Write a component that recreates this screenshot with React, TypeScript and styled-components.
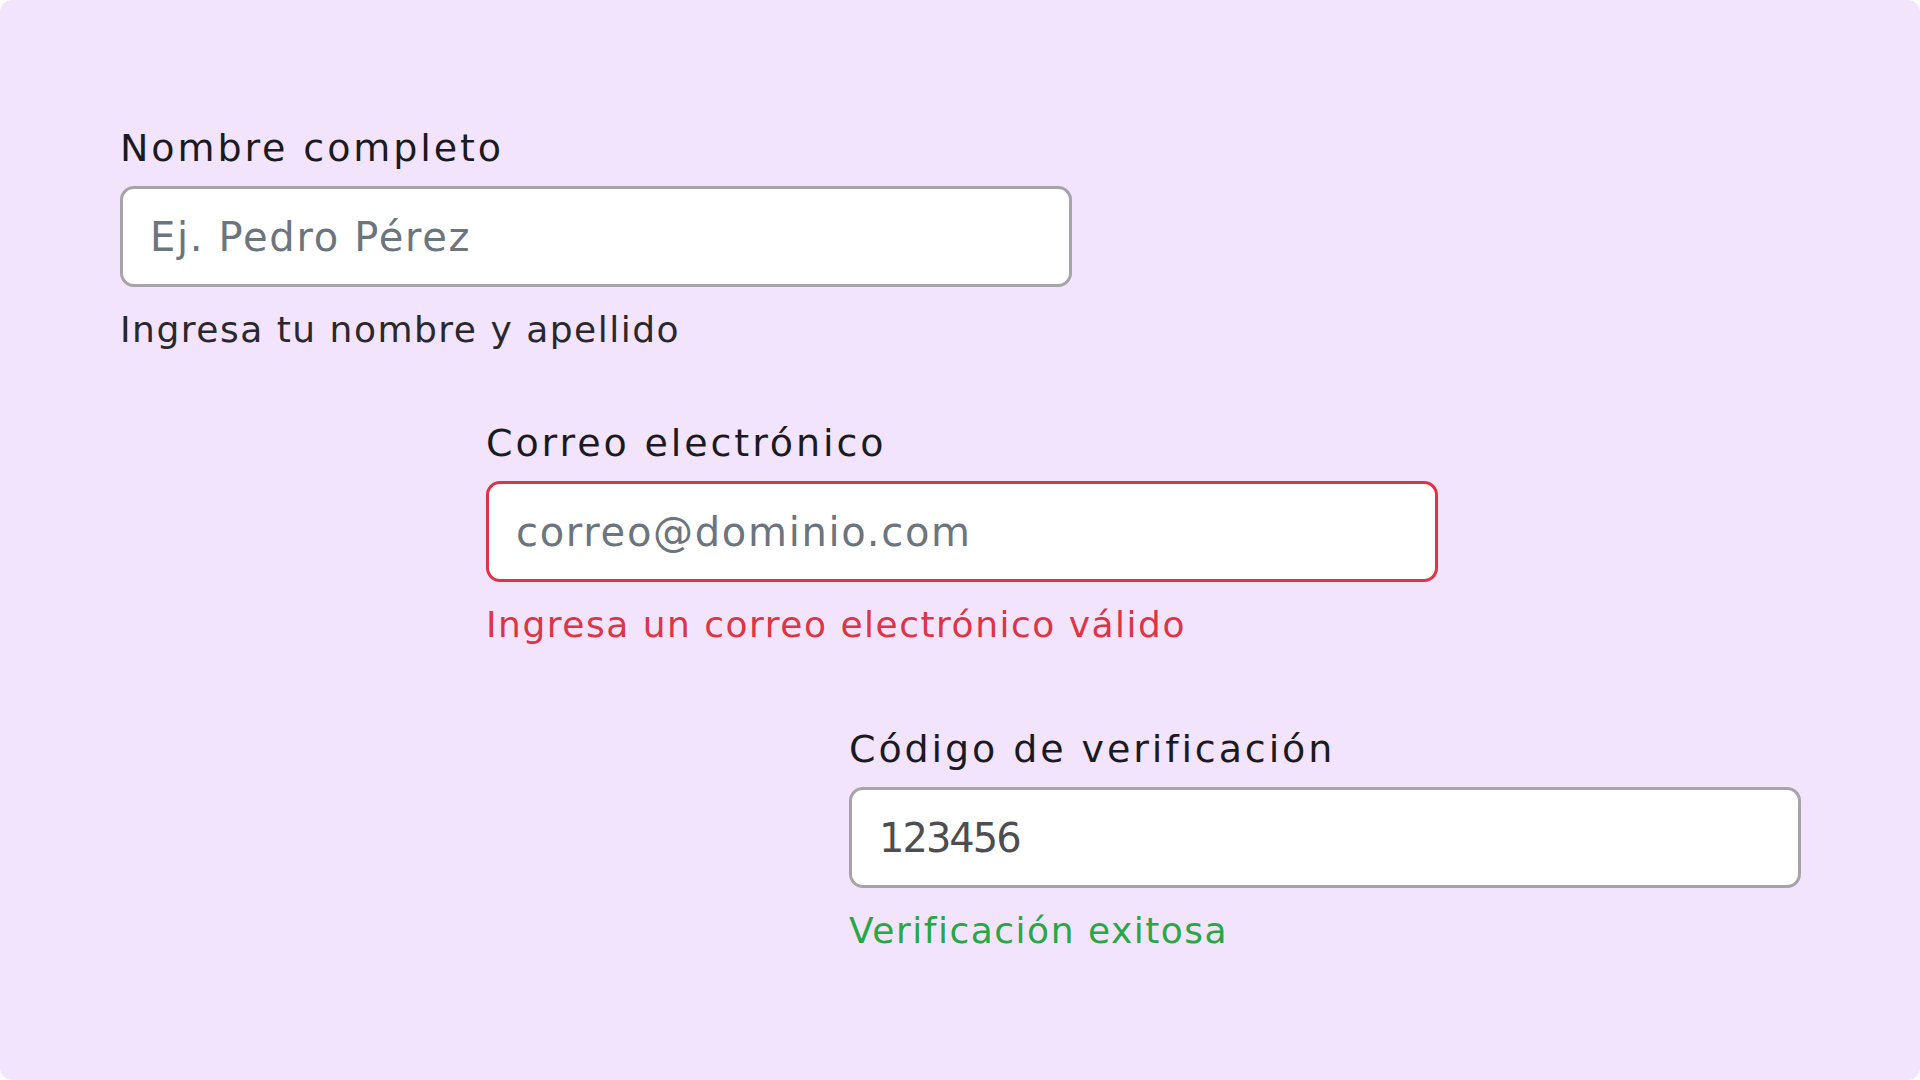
import React from "react";
import styled, { createGlobalStyle } from "styled-components";

type Tone = "neutral" | "error" | "success";

const GlobalStyle = createGlobalStyle`
  html, body {
    margin: 0;
    padding: 0;
    background: #ffffff;
  }
  * {
    box-sizing: border-box;
  }
`;

const Page = styled.div`
  width: 1920px;
  height: 1080px;
  background: #f3e4fe;
  border-radius: 12px;
  padding: 126px 0 0 0;
  display: flex;
  flex-direction: column;
  font-family: "DejaVu Sans", "Liberation Sans", sans-serif;
  overflow: hidden;
`;

const Field = styled.div<{ $indent: number; $spaceTop: number }>`
  display: flex;
  flex-direction: column;
  align-items: flex-start;
  width: 952px;
  margin-left: ${(p) => p.$indent}px;
  margin-top: ${(p) => p.$spaceTop}px;
`;

const Label = styled.label`
  font-size: 38px;
  line-height: 44px;
  letter-spacing: 2.9px;
  color: #1b1a1e;
  margin-bottom: 16px;
`;

const borderColors: Record<Tone, string> = {
  neutral: "#a6a4a8",
  error: "#dc3545",
  success: "#a6a4a8",
};

const Input = styled.input<{ $tone: Tone }>`
  width: 100%;
  height: 101px;
  background: #ffffff;
  border: 3px solid ${(p) => borderColors[p.$tone]};
  border-radius: 14px;
  padding: 0 27px;
  font-family: inherit;
  font-size: 40px;
  letter-spacing: -2px;
  color: #4e4e50;
  outline: none;

  &::placeholder {
    color: #6c757d;
    letter-spacing: 1.7px;
    opacity: 1;
  }
`;

const messageColors: Record<Tone, string> = {
  neutral: "#2a282d",
  error: "#dc3545",
  success: "#28a745",
};

const Message = styled.p<{ $tone: Tone }>`
  margin: 22px 0 0 0;
  font-size: 36px;
  line-height: 42px;
  letter-spacing: 1.5px;
  color: ${(p) => messageColors[p.$tone]};
`;

const fields = [
  {
    id: "nombre",
    label: "Nombre completo",
    placeholder: "Ej. Pedro Pérez",
    value: "",
    message: "Ingresa tu nombre y apellido",
    tone: "neutral" as Tone,
    indent: 120,
    spaceTop: 0,
  },
  {
    id: "correo",
    label: "Correo electrónico",
    placeholder: "correo@dominio.com",
    value: "",
    message: "Ingresa un correo electrónico válido",
    tone: "error" as Tone,
    indent: 486,
    spaceTop: 70,
  },
  {
    id: "codigo",
    label: "Código de verificación",
    placeholder: "",
    value: "123456",
    message: "Verificación exitosa",
    tone: "success" as Tone,
    indent: 849,
    spaceTop: 81,
  },
];

const App: React.FC = () => {
  return (
    <>
      <GlobalStyle />
      <Page>
        {fields.map((f) => (
          <Field key={f.id} $indent={f.indent} $spaceTop={f.spaceTop}>
            <Label htmlFor={f.id}>{f.label}</Label>
            <Input
              id={f.id}
              $tone={f.tone}
              placeholder={f.placeholder}
              defaultValue={f.value}
            />
            <Message $tone={f.tone}>{f.message}</Message>
          </Field>
        ))}
      </Page>
    </>
  );
};

export default App;
